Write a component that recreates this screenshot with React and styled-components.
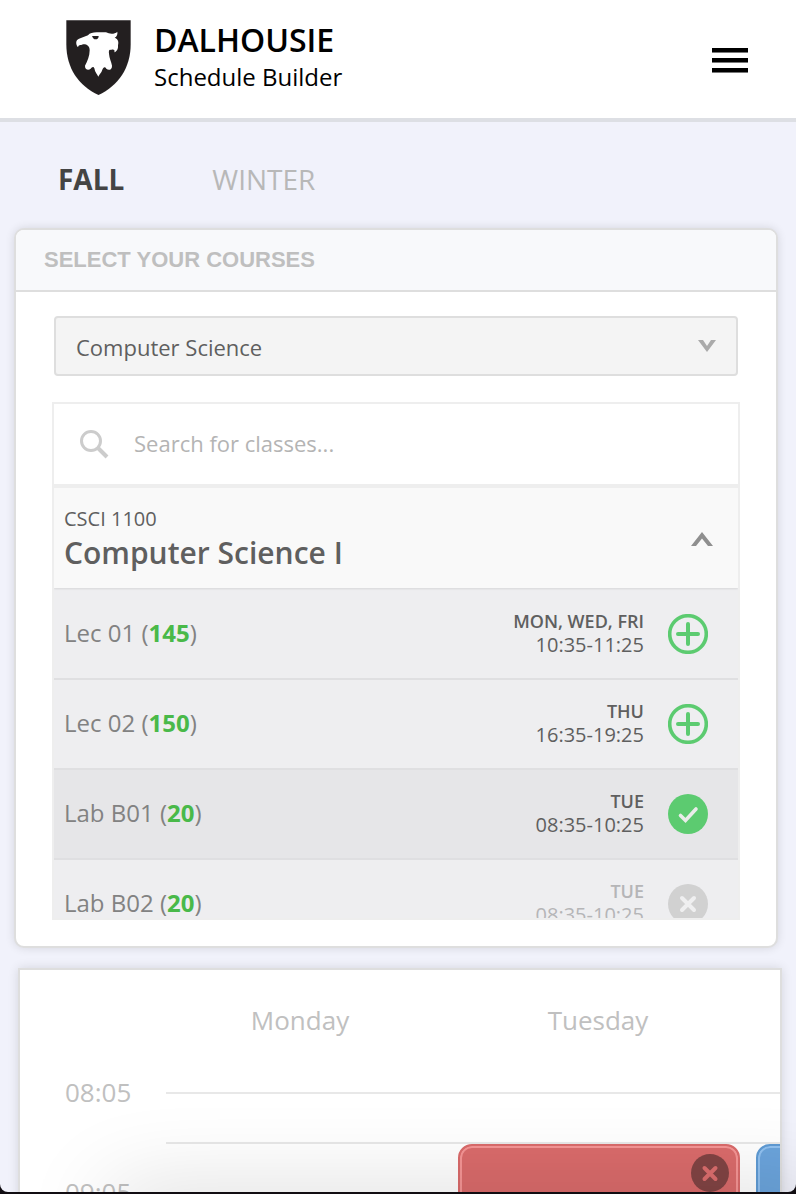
import React, { useState } from "react";
import styled, { createGlobalStyle } from "styled-components";

const GlobalStyle = createGlobalStyle`
  *, *::before, *::after { box-sizing: border-box; }
  html, body { margin: 0; background: #110d12; }
  body, button, input, select { font-family: "Open Sans", "Noto Sans", sans-serif; }
  h1, h2, p, ul { margin: 0; padding: 0; font-weight: 400; }
  button { border: 0; padding: 0; background: none; color: inherit; cursor: pointer; }
`;

const Screen = styled.div`
  position: relative;
  height: calc(100vh - 2px);
  overflow: hidden;
  background: #f1f2fb;
  border-radius: 0 0 8px 8px;
  color: #5b5b5b;
`;

const DockShade = styled.div`
  position: absolute;
  top: 100%;
  left: 110px;
  right: -40px;
  height: 60px;
  box-shadow: 0 0 90px rgba(0, 0, 0, 0.16);
  pointer-events: none;
`;

const Header = styled.header`
  display: flex;
  align-items: center;
  justify-content: space-between;
  height: 122px;
  padding: 0 48px 2px 66px;
  background: #fff;
  border-bottom: 4px solid #dddfe4;
  color: #000;
`;

const Brand = styled.a`
  display: flex;
  align-items: center;
  gap: 23px;
  color: inherit;
  text-decoration: none;
`;

const BrandText = styled.div`
  padding-bottom: 2px;
`;

const BrandName = styled.h1`
  font-size: 32px;
  line-height: 40px;
  font-weight: 600;
`;

const BrandSub = styled.p`
  font-size: 24px;
  line-height: 34px;
`;

const MenuButton = styled.button`
  display: flex;
  flex-direction: column;
  gap: 5px;
  width: 36px;
  margin-top: 4px;
`;

const MenuBar = styled.span`
  height: 5px;
  background: #000;
  border-bottom: 1px solid #777;
`;

const Terms = styled.nav`
  display: flex;
  gap: 88px;
  padding: 37px 58px 29px;
`;

const Term = styled.button`
  font-size: 28px;
  line-height: 40px;
  font-weight: ${(p) => (p.$active ? 700 : 400)};
  color: ${(p) => (p.$active ? "#444" : "#b8b8b8")};
`;

const Panel = styled.section`
  margin: 0 18px 20px 14px;
  background: #fff;
  border: 2px solid #dedede;
  border-radius: 10px;
  box-shadow: 0 0 10px rgba(0, 0, 0, 0.12);
  overflow: hidden;
`;

const PanelTitle = styled.h2`
  height: 62px;
  padding: 0 28px;
  background: #f8f9fb;
  border-bottom: 2px solid #dedede;
  font-family: "Liberation Sans", Arial, sans-serif;
  font-size: 22px;
  line-height: 60px;
  font-weight: 700;
  color: #bfbfbf;
`;

const PanelBody = styled.div`
  padding: 24px 36px 26px;
`;

const SelectField = styled.div`
  position: relative;
  margin: 0 2px 26px;
  color: #aaa;

  svg {
    position: absolute;
    top: 24px;
    right: 22px;
    pointer-events: none;
  }
`;

const SubjectSelect = styled.select`
  appearance: none;
  display: block;
  width: 100%;
  height: 60px;
  padding: 2px 56px 0 20px;
  border: 2px solid #dedede;
  border-radius: 4px;
  background: #f4f4f4;
  color: #5f5f5f;
  font-size: 22px;
`;

const ClassBox = styled.div`
  border: 2px solid #eee;
`;

const SearchField = styled.label`
  display: flex;
  align-items: center;
  gap: 24px;
  height: 84px;
  padding: 0 24px;
  border-bottom: 4px solid #eee;
  color: #ccc;
`;

const SearchInput = styled.input`
  flex: 1;
  min-width: 0;
  border: 0;
  padding: 0 0 2px;
  outline: 0;
  background: none;
  font-size: 22px;
  color: #5f5f5f;

  &::placeholder { color: #b4b4b4; opacity: 1; }
`;

const ClassScroller = styled.div`
  height: 430px;
  overflow-y: auto;
  scrollbar-width: none;
`;

const CourseHead = styled.button`
  position: relative;
  display: flex;
  align-items: center;
  justify-content: space-between;
  width: 100%;
  height: 100px;
  padding: 2px 25px 0 10px;
  background: #f9f9f9;
  box-shadow: 0 1px 2px rgba(0, 0, 0, 0.1);
  text-align: left;
  color: #8f8f8f;
`;

const CourseText = styled.span`
  display: flex;
  flex-direction: column;
  color: #5f5f5f;
`;

const CourseCode = styled.span`
  font-size: 20px;
  line-height: 28px;
`;

const CourseName = styled.span`
  font-size: 30px;
  line-height: 40px;
  font-weight: 600;
`;

const SectionList = styled.ul`
  padding-top: 2px;
  list-style: none;
  background: #eeeef0;
`;

const SectionRow = styled.li`
  display: flex;
  align-items: center;
  gap: 24px;
  height: 90px;
  padding: 0 30px 0 10px;
  border-bottom: 2px solid #dfdfe1;
  background: ${(p) => (p.$selected ? "#e6e6e8" : "#eeeef0")};
`;

const SectionName = styled.span`
  flex: 1;
  padding-bottom: 2px;
  font-size: 24px;
  line-height: 32px;
  color: #828282;
`;

const Seats = styled.strong`
  font-weight: 700;
  color: #49b949;
`;

const Meeting = styled.span`
  display: flex;
  flex-direction: column;
  padding-bottom: 2px;
  text-align: right;
  font-size: 20px;
  line-height: 24px;
  color: ${(p) => (p.$muted ? "#b5b5b7" : "#5f5f5f")};
`;

const MeetingDays = styled.span`
  font-size: 18px;
  font-weight: 600;
`;

const RoundButton = styled.button`
  display: flex;
  color: ${(p) => (p.$muted ? "#d1d1d1" : "#5ccb70")};
`;

const Calendar = styled.section`
  display: grid;
  grid-template-columns: 132px repeat(5, 298px);
  grid-template-rows: 122px repeat(20, 50px);
  margin: 0 14px 20px 18px;
  background: #fff;
  border: 2px solid #dedede;
  box-shadow: 0 0 10px rgba(0, 0, 0, 0.12);
  overflow: hidden;
`;

const DayName = styled.h2`
  grid-row: 1;
  grid-column: ${(p) => p.$col};
  padding: 32px 2px 0 0;
  text-align: center;
  font-size: 26px;
  line-height: 36px;
  color: #c0c0c0;
`;

const HourLabel = styled.span`
  grid-column: 1;
  grid-row: ${(p) => p.$row};
  margin-top: -18px;
  padding-left: 45px;
  font-size: 26px;
  line-height: 36px;
  color: #c0c0c0;
`;

const SlotLine = styled.div`
  grid-column: 2 / -1;
  grid-row: ${(p) => p.$row};
  margin-left: 14px;
  border-top: 2px solid #e8e8e8;
`;

const tones = {
  red: { fill: "#da6b6b", edge: "#da6b6b", line: "#f59595" },
  blue: { fill: "#6ba4dc", edge: "#5f9bd4", line: "#91c1f0" },
};

const ClassBlock = styled.article`
  grid-column: ${(p) => p.$col};
  grid-row: ${(p) => p.$row} / span 4;
  display: flex;
  justify-content: flex-end;
  align-items: flex-start;
  margin: 2px 8px 0;
  padding: 8px 9px;
  border: 2px solid ${(p) => tones[p.$tone].edge};
  border-radius: 14px;
  background: ${(p) => tones[p.$tone].fill};
  box-shadow: inset 0 0 0 2px ${(p) => tones[p.$tone].line};
`;

const RemoveButton = styled.button`
  display: flex;
`;

function Shield() {
  return (
    <svg width="65" height="76" viewBox="34 31 195 228" aria-hidden="true">
      <path fill="#231f20" d="M35 32H228V104C228 176 190 229 131.500 256C72 229 35 176 35 104Z" />
      <path
        fill="#fff"
        d="M70 113C63 103 62 92 73 87L100 77C105 70 115 68 126 68L154 68C165 74 180 74 188 66C189 74 187 80 180 84C190 88 193 96 190 107C191 117 187 126 179 128C182 121 176 118 169 121C163 118 162 124 163 132C164 146 170 156 172 168C173 180 162 184 155 177C151 170 146 172 143 180C140 190 134 193 131 201C127 194 121 188 119 176C116 169 112 172 108 177C101 184 90 179 91 168C98 155 105 140 105 122C105 108 95 103 85 104C82 108 72 103 70 113Z"
      />
      <path fill="#231f20" d="M112 79H132C132 86 128 89 123 89C117 89 115 86 112 79Z" />
    </svg>
  );
}

function SearchIcon() {
  return (
    <svg width="32" height="32" viewBox="0 0 32 32" fill="none" stroke="currentColor" aria-hidden="true">
      <circle cx="13" cy="13" r="9.500" strokeWidth="3" />
      <path d="M19.500 19.500L29 29" strokeWidth="4" />
    </svg>
  );
}

function Chevron({ up }) {
  return up ? (
    <svg width="22" height="14" viewBox="0 0 22 14" fill="currentColor" aria-hidden="true">
      <path d="M0 14L11 0L22 14H17L11 6.500L5 14Z" />
    </svg>
  ) : (
    <svg width="18" height="12" viewBox="0 0 18 12" fill="currentColor" aria-hidden="true">
      <path d="M0 0H5L9 6L13 0H18L9 12Z" />
    </svg>
  );
}

function StatusIcon({ kind }) {
  return (
    <svg width="40" height="40" viewBox="0 0 40 40" fill="none" aria-hidden="true">
      {kind === "add" ? (
        <>
          <circle cx="20" cy="20" r="18.300" stroke="currentColor" strokeWidth="3.600" />
          <path d="M20 10V30M10 20H30" stroke="currentColor" strokeWidth="4" strokeLinecap="round" />
        </>
      ) : (
        <circle cx="20" cy="20" r="20" fill="currentColor" />
      )}
      {kind === "added" && (
        <path d="M12.500 21.500L17.500 26.500L28 15" stroke="#e9ece9" strokeWidth="3.600" strokeLinecap="round" />
      )}
      {kind === "blocked" && (
        <path d="M14 14L26 26M26 14L14 26" stroke="#efeff0" strokeWidth="4" strokeLinecap="round" />
      )}
    </svg>
  );
}

function RemoveIcon() {
  return (
    <svg width="38" height="38" viewBox="0 0 38 38" fill="none" aria-hidden="true">
      <circle cx="19" cy="19" r="19" fill="#824444" />
      <path
        d="M13.500 14L24.500 25M24.500 14L13.500 25"
        stroke="#dc6e6e"
        strokeWidth="4"
        strokeLinecap="round"
      />
    </svg>
  );
}

const sections = [
  { name: "Lec 01", seats: 145, days: "MON, WED, FRI", time: "10:35-11:25", kind: "add", action: "Add" },
  { name: "Lec 02", seats: 150, days: "THU", time: "16:35-19:25", kind: "add", action: "Add" },
  { name: "Lab B01", seats: 20, days: "TUE", time: "08:35-10:25", kind: "added", action: "Remove" },
  { name: "Lab B02", seats: 20, days: "TUE", time: "08:35-10:25", kind: "blocked", action: "Conflict" },
];

const days = ["Monday", "Tuesday"];
const hours = ["08:05", "09:05"];
const slots = Array.from({ length: 20 }, (_, i) => i + 2);

export default function App() {
  const [term, setTerm] = useState("FALL");
  const [open, setOpen] = useState(true);

  return (
    <Screen>
      <GlobalStyle />
      <Header>
        <Brand href="#">
          <Shield />
          <BrandText>
            <BrandName>DALHOUSIE</BrandName>
            <BrandSub>Schedule Builder</BrandSub>
          </BrandText>
        </Brand>
        <MenuButton aria-label="Menu">
          <MenuBar />
          <MenuBar />
          <MenuBar />
        </MenuButton>
      </Header>

      <Terms>
        {["FALL", "WINTER"].map((t) => (
          <Term key={t} $active={t === term} onClick={() => setTerm(t)}>
            {t}
          </Term>
        ))}
      </Terms>

      <Panel>
        <PanelTitle>SELECT YOUR COURSES</PanelTitle>
        <PanelBody>
          <SelectField>
            <SubjectSelect aria-label="Subject">
              <option>Computer Science</option>
            </SubjectSelect>
            <Chevron />
          </SelectField>
          <ClassBox>
            <SearchField>
              <SearchIcon />
              <SearchInput type="text" aria-label="Search for classes" placeholder="Search for classes..." />
            </SearchField>
            <ClassScroller>
              <CourseHead aria-expanded={open} onClick={() => setOpen(!open)}>
                <CourseText>
                  <CourseCode>CSCI 1100</CourseCode>
                  <CourseName>Computer Science I</CourseName>
                </CourseText>
                <Chevron up />
              </CourseHead>
              {open && (
                <SectionList>
                  {sections.map((s) => (
                    <SectionRow key={s.name} $selected={s.kind === "added"}>
                      <SectionName>
                        {s.name} (<Seats>{s.seats}</Seats>)
                      </SectionName>
                      <Meeting $muted={s.kind === "blocked"}>
                        <MeetingDays>{s.days}</MeetingDays>
                        <span>{s.time}</span>
                      </Meeting>
                      <RoundButton $muted={s.kind === "blocked"} aria-label={`${s.action} ${s.name}`}>
                        <StatusIcon kind={s.kind} />
                      </RoundButton>
                    </SectionRow>
                  ))}
                </SectionList>
              )}
            </ClassScroller>
          </ClassBox>
        </PanelBody>
      </Panel>

      <Calendar>
        {days.map((d, i) => (
          <DayName key={d} $col={i + 2}>{d}</DayName>
        ))}
        {hours.map((h, i) => (
          <HourLabel key={h} $row={2 + i * 2}>{h}</HourLabel>
        ))}
        {slots.map((r) => (
          <SlotLine key={r} $row={r} />
        ))}
        <ClassBlock $col={3} $row={3} $tone="red">
          <RemoveButton aria-label="Remove class">
            <RemoveIcon />
          </RemoveButton>
        </ClassBlock>
        <ClassBlock $col={4} $row={3} $tone="blue" />
      </Calendar>
      <DockShade />
    </Screen>
  );
}
